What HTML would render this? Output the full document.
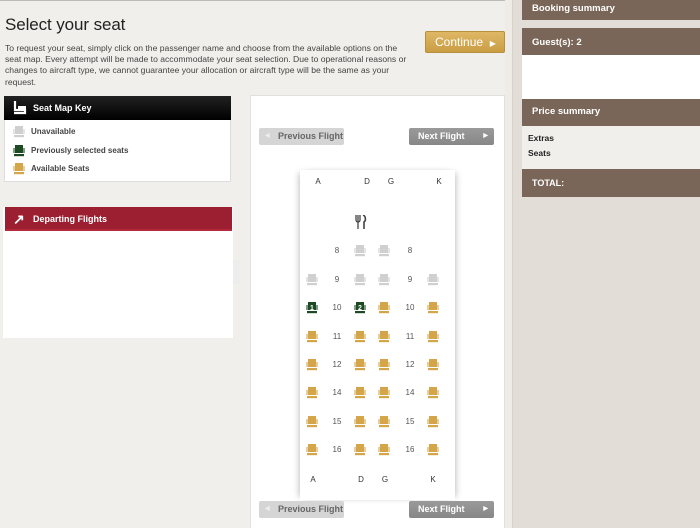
<!DOCTYPE html>
<html><head><meta charset="utf-8"><style>
*{margin:0;padding:0;box-sizing:border-box}
html{overflow:hidden}
body{width:700px;height:528px;overflow:hidden;background:#f1efec;font-family:"Liberation Sans",Arial,sans-serif;position:relative}
.a{position:absolute}
h1{position:absolute;left:5px;top:15px;font-size:17px;font-weight:normal;color:#222;letter-spacing:-0.1px}
p.intro{position:absolute;left:5px;top:43px;width:410px;font-size:8.6px;line-height:11.2px;color:#444}
.btn{position:absolute;left:425px;top:31px;width:80px;height:22px;background:linear-gradient(#dfb866,#c99d43);border:1px solid #b8903e;border-radius:2px;color:#fff;font-size:12px;line-height:20px;padding-left:9px}
.hdr{font-weight:bold;font-size:9px;color:#fff}
.key{left:4px;top:96px;width:227px;height:86px;background:#fff;border:1px solid #ddd}
.keyh{left:4px;top:96px;width:227px;height:24px;background:linear-gradient(#222,#000);}
.keyrow{position:absolute;left:31px;font-size:8px;font-weight:bold;color:#444}
.dep{left:3px;top:207px;width:230px;height:131px;background:#fff}
.deph{left:5px;top:207px;width:227px;height:24px;background:#9b1f31;border-bottom:2px solid #b4283c}
.panel{left:250px;top:95px;width:255px;height:440px;background:#fff;border:1px solid #e2e0dc}
.cabin{left:300px;top:170px;width:155px;height:330px;background:#fff;box-shadow:-4px 0 6px -3px rgba(0,0,0,.25),4px 0 6px -3px rgba(0,0,0,.25)}
.fb{position:absolute;height:17px;font-size:9px;font-weight:bold;line-height:17px;border-radius:2px}
.prev{background:#d5d5d5;color:#666;width:85px;padding-left:19px}
.next{background:linear-gradient(#9a9a9a,#878787);color:#fff;width:85px;padding-left:9px}
.l{position:absolute;font-size:8px;color:#333;transform:translateX(-50%)}
.n{position:absolute;font-size:8px;color:#555;transform:translateX(-50%)}
.s{position:absolute;width:12px;height:12px}
.side{left:512px;top:0;width:188px;height:528px;background:#e2ddd6;border-left:1px solid #d8d2c8}
.strip{left:505px;top:0;width:7px;height:528px;background:#efece8}
.bh{position:absolute;left:522px;width:178px;background:#7a6658;color:#fff;font-weight:bold;font-size:9.5px;padding-left:10px}
</style></head><body>
<svg width="0" height="0" style="position:absolute">
<defs>
<g id="seat"><rect x="0" y="3" width="2.5" height="5" fill-opacity=".55"/><rect x="9.5" y="3" width="2.5" height="5" fill-opacity=".55"/><rect x="2" y="0" width="8" height="8"/><rect x="1" y="9" width="10" height="2.2" fill-opacity="1"/></g>
</defs></svg>
<div class="a" style="left:0;top:0;width:505px;height:1px;background:#bbb"></div>
<h1>Select your seat</h1>
<p class="intro">To request your seat, simply click on the passenger name and choose from the available options on the seat map. Every attempt will be made to accommodate your seat selection. Due to operational reasons or changes to aircraft type, we cannot guarantee your allocation or aircraft type will be the same as your request.</p>
<div class="btn">Continue &nbsp;<span style="font-size:8px">▶</span></div>

<div class="a key"></div>
<div class="a keyh"><svg class="a" style="left:8px;top:4px" width="16" height="16"><path d="M3 1v9h10v3H2" stroke="#fff" stroke-width="2.2" fill="none"/><rect x="6" y="6" width="8" height="4" fill="#fff"/></svg><span class="a hdr" style="left:29px;top:7px">Seat Map Key</span></div>
<svg class="s" style="left:13px;top:126px;fill:#cfcfcf"><use href="#seat"/></svg><div class="keyrow" style="top:127px">Unavailable</div>
<svg class="s" style="left:13px;top:145px;fill:#1d4a22"><use href="#seat"/></svg><div class="keyrow" style="top:146px">Previously selected seats</div>
<svg class="s" style="left:13px;top:163px;fill:#d4a649"><use href="#seat"/></svg><div class="keyrow" style="top:164px">Available Seats</div>

<div class="a dep"></div>
<div class="a deph"><span class="a" style="left:8px;top:4px;color:#fff;font-size:14px;font-weight:bold">↗</span><span class="a hdr" style="left:28px;top:7px">Departing Flights</span></div>
<div class="a" style="left:233px;top:260px;width:7px;height:24px;background:#ededed"></div>

<div class="a panel"></div>
<div class="a cabin"></div>
<div class="fb prev" style="left:259px;top:128px"><span style="position:absolute;left:6px;font-size:6px;color:#eee">◀</span>Previous Flight</div>
<div class="fb next" style="left:409px;top:128px">Next Flight<span style="position:absolute;right:6px;font-size:6px">▶</span></div>
<div class="fb prev" style="left:259px;top:501px"><span style="position:absolute;left:6px;font-size:6px;color:#eee">◀</span>Previous Flight</div>
<div class="fb next" style="left:409px;top:501px">Next Flight<span style="position:absolute;right:6px;font-size:6px">▶</span></div>

<div class="l" style="left:318px;top:177px">A</div><div class="l" style="left:367px;top:177px">D</div><div class="l" style="left:391px;top:177px">G</div><div class="l" style="left:439px;top:177px">K</div>
<div class="l" style="left:313px;top:475px">A</div><div class="l" style="left:361px;top:475px">D</div><div class="l" style="left:385px;top:475px">G</div><div class="l" style="left:433px;top:475px">K</div>
<svg class="a" style="left:355px;top:215px" width="12" height="14"><path d="M1 0v5a2 2 0 0 0 4 0V0M3 0v14" stroke="#444" stroke-width="1.3" fill="none"/><path d="M8 0c3 1 3 6 1 7v7" stroke="#444" stroke-width="1.6" fill="none"/></svg>

<div id="rows"></div>
<script>
var rows=[[8,251,["","u","u",""]],[9,280,["u","u","u","u"]],[10,308,["g1","g2","a","a"]],[11,337,["a","a","a","a"]],[12,365,["a","a","a","a"]],[14,393,["a","a","a","a"]],[15,422,["a","a","a","a"]],[16,450,["a","a","a","a"]]];
var xs=[312,360,384,433],h="";
rows.forEach(function(r){
 h+='<div class="n" style="left:337px;top:'+(r[1]-5)+'px">'+r[0]+'</div><div class="n" style="left:410px;top:'+(r[1]-5)+'px">'+r[0]+'</div>';
 r[2].forEach(function(t,i){if(!t)return;var c=t=="u"?"#d0d0d0":t=="a"?"#d4a649":"#1d4a22";
  h+='<svg class="s" style="left:'+(xs[i]-6)+'px;top:'+(r[1]-6)+'px;fill:'+c+'"><use href="#seat"/>'+(t[0]=="g"?'<text x="6" y="8" font-size="7" font-weight="bold" fill="#fff" text-anchor="middle" font-family="Liberation Sans">'+t[1]+'</text>':'')+'</svg>';});
});
document.getElementById("rows").innerHTML=h;
</script>

<div class="a strip"></div>
<div class="a side"></div>
<div class="bh" style="top:0;height:20px;line-height:18px">Booking summary</div>
<div class="bh" style="top:28px;height:27px;line-height:29px">Guest(s): 2</div>
<div class="a" style="left:522px;top:55px;width:178px;height:44px;background:#fff"></div>
<div class="bh" style="top:99px;height:27px;line-height:26px">Price summary</div>
<div class="a" style="left:522px;top:126px;width:178px;height:43px;background:#f1efec"></div>
<div class="a" style="left:528px;top:133px;font-size:8.5px;font-weight:bold;color:#222">Extras</div>
<div class="a" style="left:528px;top:148px;font-size:8.5px;font-weight:bold;color:#222">Seats</div>
<div class="bh" style="top:169px;height:28px;line-height:29px;font-size:9px">TOTAL:</div>
</body></html>
